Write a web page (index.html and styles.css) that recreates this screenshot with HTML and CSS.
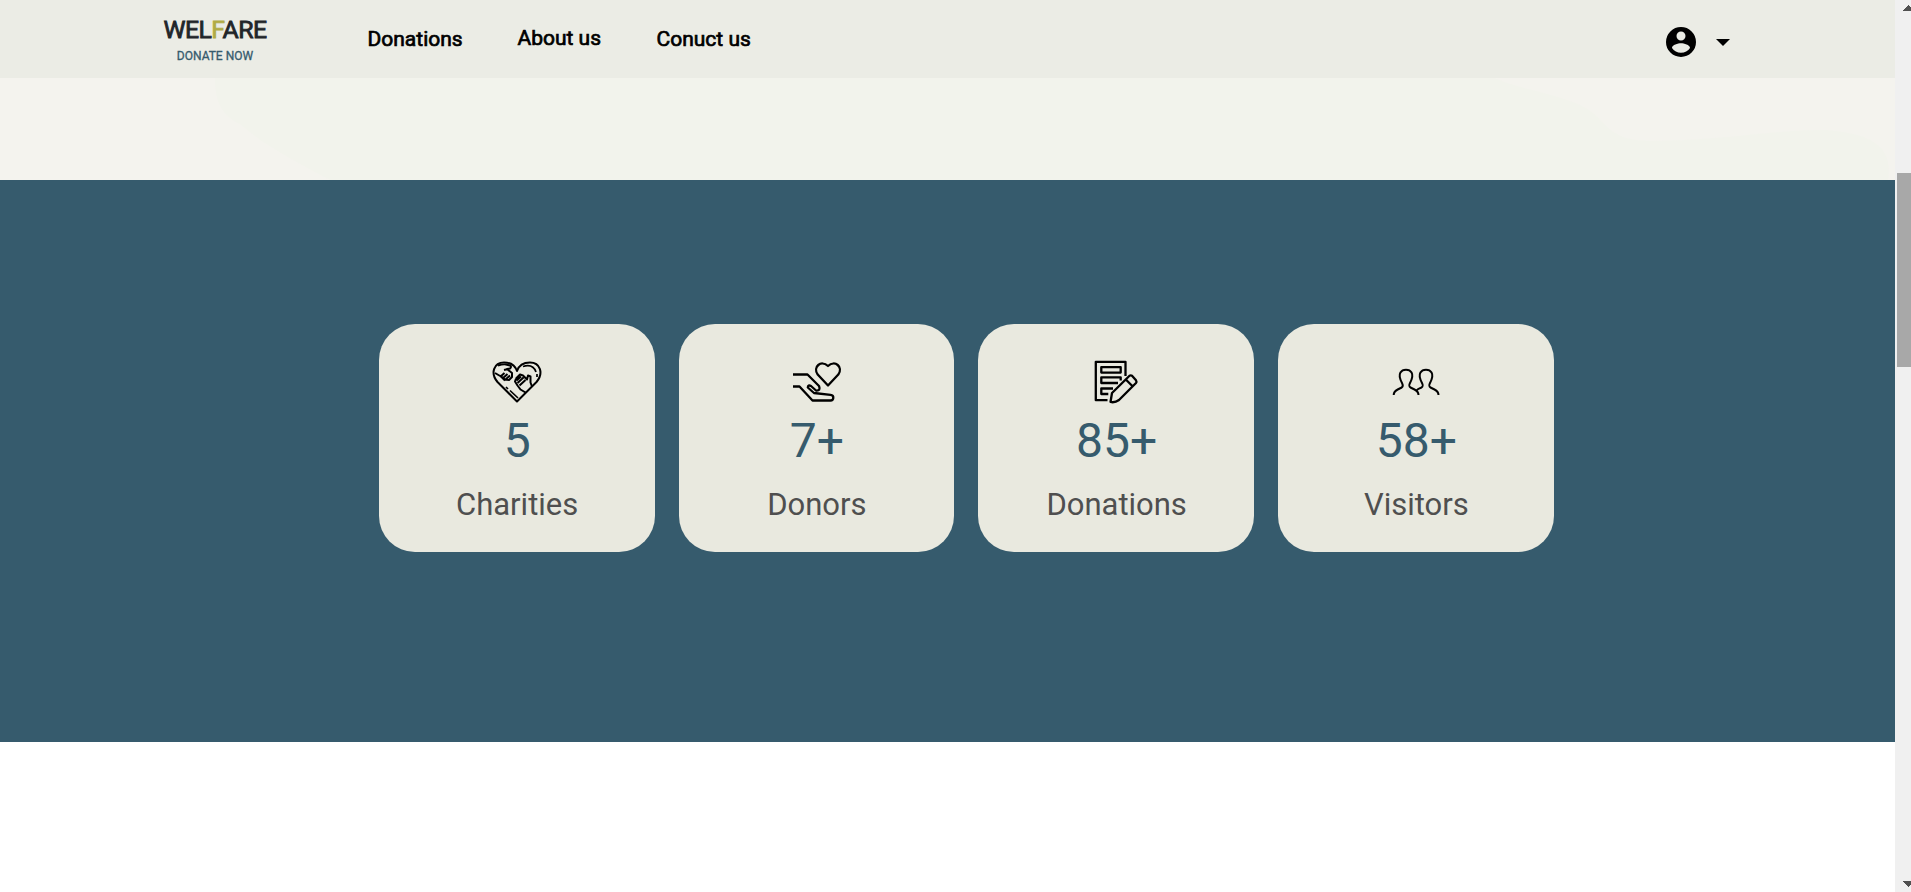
FILE: index.html
```html
<!DOCTYPE html>
<html lang="en">
<head>
<meta charset="utf-8">
<title>Welfare</title>
<link rel="stylesheet" href="styles.css">
</head>
<body>
<div class="page">
  <header class="navbar">
    <a class="brand">
      <span class="brand-name">WEL<span class="brand-accent">F</span>ARE</span>
      <span class="brand-tag">DONATE NOW</span>
    </a>
    <nav class="links">
      <a class="link link-donations">Donations</a>
      <a class="link link-about">About us</a>
      <a class="link link-contact">Conuct us</a>
    </nav>
    <div class="account">
      <svg class="avatar" viewBox="2 2 20 20"><path fill-rule="evenodd" d="M12 2a10 10 0 1 0 0 20a10 10 0 0 0 0-20zm0 3a3 3 0 1 1 0 6a3 3 0 0 1 0-6zm0 14.200a7.200 7.200 0 0 1-6-3.220c.03-1.990 4-3.080 6-3.080s5.970 1.090 6 3.080a7.200 7.200 0 0 1-6 3.220z"/></svg>
      <svg class="caret" viewBox="0 0 14 7"><path d="M0 0h14l-7 7z"/></svg>
    </div>
  </header>
  <section class="hero">
    <svg class="hero-art" viewBox="0 0 1895 102" preserveAspectRatio="none">
      <path d="M215 0C215 24 222 38 240 46C265 68 298 85 330 102H1888C1894 68 1870 55 1825 52C1770 52 1730 62 1650 63C1600 62 1610 38 1575 25C1545 13 1515 10 1495 0z"/>
    </svg>
  </section>
  <section class="stats">
    <div class="cards">
      <article class="card">
        <svg class="icon" viewBox="0 0 75 60">
          <path class="w20" d="M37 51.500L17.500 32C10 23 14 12.500 24 12.500C31 12.500 35 15 37 21C39 15 43 12.500 50 12.500C60 12.500 64 23 56.500 32z"/>
          <path class="w20" d="M15 23l6 3.500 4 4M18 15.500q5-1.500 8-1l4 1q2 1 0 3l-3 .5 5 4v4l-3 3-4-.5-5-4M20 27l4.500-4M22.500 28.500l5-4.500M25 30l5-4.500M28 19l-4 1"/>
          <path class="w20" d="M36 28.500l4-4 3 1 4 4 1-4 2.500 1v6l1.500 4M36 28.500l-1 3 2.500 4 3 4 5 3M36.500 30.500l4.500-4M37.500 33l6-5.500M39.500 35.500l6-5.500"/>
          <path class="w17" d="M43 16.500q10-3 13 5.500M57 24v3M26 37l2 2M30 40.500l8 7.500"/>
        </svg>
        <div class="value">5</div>
        <div class="label">Charities</div>
      </article>
      <article class="card">
        <svg class="icon" viewBox="0 0 75 60">
          <path class="w23" d="M48 35.500L37.700 24.500C32.500 17 41 9.500 48 16C55 9.500 63.500 17 58.300 24.500z"/>
          <path class="w23" d="M13 24.500h14.500L39 36q2 5-3 4.500l-5-4.500q-3-1.500-3.200 1.500L34 43l16.500 1.800q3 .4 2.800 3t-2.800 2.700H32.500L19.500 36.500H13"/>
        </svg>
        <div class="value">7+</div>
        <div class="label">Donors</div>
      </article>
      <article class="card">
        <svg class="icon" viewBox="0 0 75 60">
          <path class="w23" d="M45.500 26V11.800H15.800v38.400H27.500M21.300 17.200h19.400v5.400H21.300zM38 33H21.300v-5.600h19.400v3M33 38.500H21.300v5.500h7"/>
          <path class="w23" d="M30.500 52l1.500-9L49.500 25.800q1.300-.8 2.500 0l4 4.500q1 1.500 0 2.700L39 50q-4 3-8.500 2zM45.800 29.500l6.500 6.500"/>
        </svg>
        <div class="value">85+</div>
        <div class="label">Donations</div>
      </article>
      <article class="card">
        <svg class="icon icon-people" viewBox="0 0 75 60">
          <path class="w20" d="M13.700 45q0-3.500 4-5.500l4-2c2-1.500 1.300-2.500.3-4.500C16.500 23 22 19.700 26 19.700S35.500 23 30 33c-1 2-1.500 3 .5 4.500l4 2q4 2 4 5.500"/>
          <path class="w20" d="M36.500 40.500q1-1.500 5-3c2-1.500 1.500-2.500.5-4.500C36.500 23 42 19.700 46 19.700S55.500 23 50 33c-1 2-1.500 3 .5 4.500l4 2q4 2 4 5.500"/>
        </svg>
        <div class="value">58+</div>
        <div class="label">Visitors</div>
      </article>
    </div>
  </section>
</div>
<aside class="scrollbar">
  <svg class="arrow arrow-up" viewBox="0 0 12 6" shape-rendering="crispEdges"><path d="M0 6l6-6 6 6z"/></svg>
  <div class="thumb"></div>
  <svg class="arrow arrow-down" viewBox="0 0 12 6" shape-rendering="crispEdges"><path d="M0 0h12l-6 6z"/></svg>
</aside>
</body>
</html>
```

FILE: styles.css
```css
* { box-sizing: border-box; }
body {
  margin: 0;
  height: 892px;
  display: flex;
  overflow: hidden;
  background: #fff;
  font-family: Roboto, "Liberation Sans", sans-serif;
}
.page { width: 1895px; flex: none; }
.navbar {
  height: 78px;
  display: flex;
  align-items: flex-start;
  background: #ebece5;
}
.brand {
  width: 104px;
  margin-left: 163px;
  padding-top: 15px;
  display: flex;
  flex-direction: column;
  align-items: center;
  white-space: nowrap;
}
.brand-name {
  font-size: 24.8px;
  line-height: 30px;
  letter-spacing: -0.5px;
  color: #212529;
  -webkit-text-stroke: 0.8px;
}
.brand-accent { color: #b1ab45; }
.brand-tag {
  margin-top: 3px;
  font-size: 12px;
  line-height: 16px;
  color: #365b6d;
  -webkit-text-stroke: 0.3px #365b6d;
}
.links {
  display: flex;
  margin-left: 100.500px;
  padding-top: 26px;
}
.link {
  font-size: 21px;
  line-height: 26px;
  color: #000;
  white-space: nowrap;
  -webkit-text-stroke: 0.7px #000;
}
.link-donations { width: 150px; }
.link-about { width: 139px; margin-top: -1px; }
.account {
  display: flex;
  align-items: center;
  gap: 20px;
  margin-left: auto;
  margin-right: 165px;
  padding-top: 27px;
}
.avatar { width: 30px; height: 30px; }
.caret { width: 14px; height: 7px; }
.hero { height: 102px; background: #f4f3ee; }
.hero-art { display: block; width: 100%; height: 102px; fill: #f2f3ec; }
.stats {
  height: 562px;
  padding: 144px 341.250px 0 378.750px;
  background: #365b6d;
}
.cards {
  display: grid;
  grid-template-columns: repeat(4, 1fr);
  gap: 24px;
}
.card {
  height: 228px;
  padding-top: 26px;
  display: flex;
  flex-direction: column;
  align-items: center;
  border-radius: 36px;
  background: #e9e9df;
}
.icon {
  width: 75px;
  height: 60px;
  flex: none;
  margin-left: 2px;
  fill: none;
  stroke: #000;
  stroke-linejoin: round;
}
.icon-people { margin-left: 3px; }
.w17 { stroke-width: 1.7; }
.w20 { stroke-width: 2; }
.w23 { stroke-width: 2.3; }
.value {
  margin-top: 3px;
  padding-left: 1px;
  font-size: 48px;
  line-height: 56px;
  color: #365b6d;
}
.label {
  margin-top: 18px;
  padding-left: 1px;
  font-size: 31px;
  line-height: 36px;
  color: #4f4f4f;
}
.scrollbar {
  width: 16px;
  flex: none;
  display: flex;
  flex-direction: column;
  align-items: flex-end;
  background: #f0f0f0;
  overflow: hidden;
}
.arrow { width: 12px; height: 6px; flex: none; fill: #505050; margin-right: -3px; }
.arrow-up { margin-top: 5px; }
.thumb {
  width: 14px;
  height: 194px;
  margin-top: 162px;
  background: #a8a8a8;
}
.arrow-down { margin-top: auto; margin-bottom: 5px; }
```
